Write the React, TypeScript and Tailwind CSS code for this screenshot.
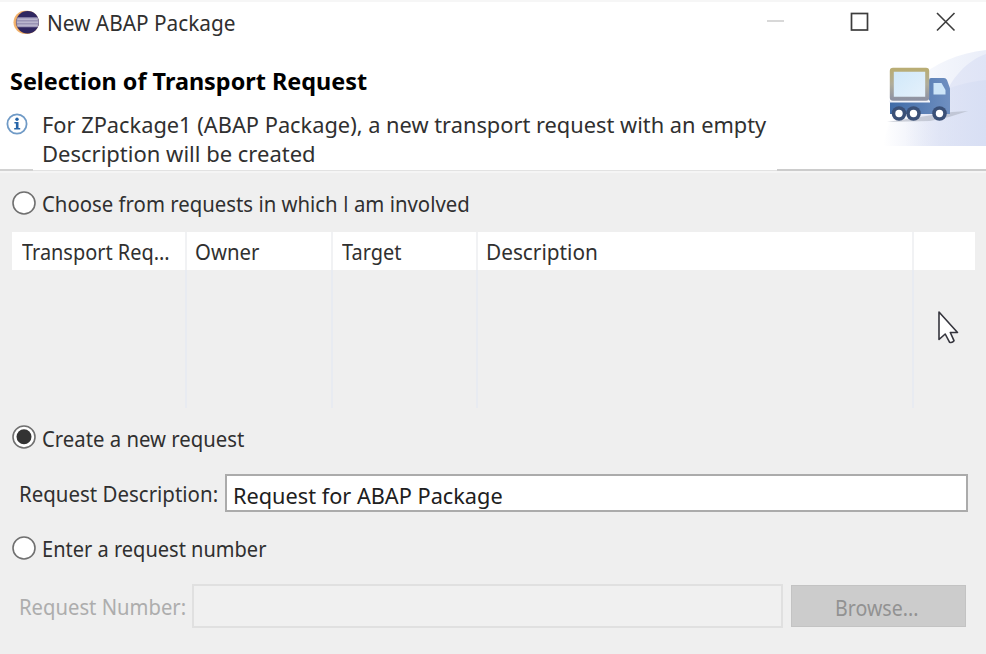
import type { ReactNode } from 'react';

function Label({ className = '', children }: { className?: string; children: ReactNode }) {
  return (
    <span className={`block origin-left whitespace-nowrap text-[22px] leading-[30px] ${className}`}>{children}</span>
  );
}

function EclipseIcon() {
  return (
    <svg className="h-[26px] w-[28px] shrink-0" viewBox="0 0 28 26">
      <circle cx="13" cy="13.300" r="11.500" fill="#f3b46f" />
      <circle cx="15.200" cy="13.300" r="11.600" fill="#d99a5b" />
      <circle cx="15.600" cy="13.300" r="11.300" fill="#2f2660" />
      <path d="M5.600 8.300h20a11.300 11.300 0 0 1 0 10h-20a11.300 11.300 0 0 1 0-10z" fill="#9a94b5" />
      <path d="M5.500 10.200h20M5 13.300h21M5.500 16.400h20" stroke="#bab5cd" strokeWidth="1.600" />
    </svg>
  );
}

function InfoIcon() {
  return (
    <svg className="h-[22px] w-[22px] shrink-0" viewBox="0 0 22 22">
      <circle cx="11" cy="11" r="9.600" fill="#fff" stroke="#6f9ac6" strokeWidth="1.800" />
      <circle cx="11" cy="6.200" r="1.700" fill="#2564a8" />
      <path d="M8.400 9h4.100v6h1.700v1.600H8.200V15h1.700v-4.500H8.400z" fill="#2564a8" />
    </svg>
  );
}

function TruckBanner() {
  return (
    <svg className="h-[100px] w-[106px] shrink-0" viewBox="880 48 106 100">
      <defs>
        <linearGradient id="sky" x1="0" x2="1" y1="0" y2="0">
          <stop offset="0" stopColor="#fff" />
          <stop offset=".55" stopColor="#e5e9f7" />
          <stop offset="1" stopColor="#dfe4f6" />
        </linearGradient>
        <linearGradient id="outer" x1="0" x2="1" y1="0" y2="0">
          <stop offset="0" stopColor="#fff" />
          <stop offset="1" stopColor="#eaeef9" />
        </linearGradient>
        <linearGradient id="inner" x1="0" x2="1" y1="0" y2="0">
          <stop offset="0" stopColor="#dbe1f4" stopOpacity="0" />
          <stop offset="1" stopColor="#d8dff4" />
        </linearGradient>
        <linearGradient id="frame" x1="0" x2="0" y1="0" y2="1">
          <stop offset="0" stopColor="#b9ad75" />
          <stop offset=".5" stopColor="#b0ad9b" />
          <stop offset="1" stopColor="#8f93a3" />
        </linearGradient>
        <linearGradient id="cargo" x1="0" x2="1" y1="0" y2="1">
          <stop offset="0" stopColor="#cfe8fa" />
          <stop offset="1" stopColor="#e6f1fb" />
        </linearGradient>
        <linearGradient id="body" x1="0" x2="1" y1="0" y2="0">
          <stop offset="0" stopColor="#406ca8" />
          <stop offset="1" stopColor="#6f8fc0" />
        </linearGradient>
      </defs>
      <path d="M883 146C891 92 930 56 986 50V146z" fill="url(#outer)" />
      <path d="M883 146C888 128 893 113 900 103H942C950 78 968 60 986 54V146z" fill="url(#sky)" />
      <path d="M905 146V118C926 98 950 83 986 80V146z" fill="url(#inner)" />
      <path d="M887 122L952 112 968 111 949 117 930 121z" fill="#a9aebb" opacity=".55" />
      <path d="M890 102H929V80q0-2 2-2h13q2 0 3 2l2.500 7q.5 1 .5 2v25H890z" fill="url(#body)" />
      <path d="M933.500 83h8l4 7v4.500h-12z" fill="#cde5f8" />
      <path d="M889 101.500H930" stroke="#f3f5fb" strokeWidth="2" />
      <rect x="891.800" y="69.800" width="35.400" height="29" rx="1.200" fill="url(#cargo)" stroke="url(#frame)" strokeWidth="4" />
      {[899, 913.5, 939.5].map((x) => (
        <g key={x}>
          <circle cx={x} cy="113.500" r="7.300" fill="#3a5077" />
          <circle cx={x} cy="113.500" r="3.700" fill="#fff" />
        </g>
      ))}
    </svg>
  );
}

function Radio({ checked = false }: { checked?: boolean }) {
  return (
    <svg className="size-6 shrink-0" viewBox="0 0 24 24">
      <circle cx="12" cy="12" r="11" fill="#fff" stroke="#707070" strokeWidth="1.600" />
      {checked && <circle cx="12" cy="11.800" r="7.500" fill="#333" />}
    </svg>
  );
}

export default function App() {
  return (
    <div className="flex h-[654px] w-[986px] flex-col overflow-hidden bg-[#efefef] font-['Noto_Sans','Open_Sans',sans-serif] text-[#303030]">
      <header className="flex h-[173px] shrink-0 flex-col border-b-2 border-[#f5f5f5] bg-white">
        <div className="flex h-[48px] shrink-0 items-start border-t-2 border-[#f6f6f6] pl-[12px]">
          <div className="mt-[7px]"><EclipseIcon /></div>
          <Label className="mt-[5px] ml-[7px] scale-x-[.945]">New ABAP Package</Label>
          <svg className="mt-[6px] mr-[29px] ml-auto h-[28px] w-[192px]" viewBox="765 8 192 28" fill="none">
            <path d="M767 21h17" stroke="#d8d8d8" strokeWidth="2" />
            <rect x="851.500" y="13.500" width="16" height="16.500" stroke="#3c3c3c" strokeWidth="1.700" />
            <path d="M937 13l17.500 17.500M954.500 13L937 30.500" stroke="#3c3c3c" strokeWidth="1.600" />
          </svg>
        </div>
        <div className="flex h-[121px] shrink-0 justify-between">
          <div className="pt-[17px]">
            <h1 className="ml-[10px] origin-left scale-x-[.995] text-[23.5px] leading-[32px] font-bold whitespace-nowrap text-black">
              Selection of Transport Request
            </h1>
            <div className="mt-[12px] flex pl-[6px]">
              <div className="mt-[4px]"><InfoIcon /></div>
              <div className="ml-[14px]">
                <Label className="scale-x-[.991]">For ZPackage1 (ABAP Package), a new transport request with an empty</Label>
                <Label className="-mt-px">Description will be created</Label>
              </div>
            </div>
          </div>
          <TruckBanner />
        </div>
        <div className="flex h-[2px] shrink-0 items-end justify-between">
          <span className="h-[2px] w-[33px] bg-[#d2d2d2]" />
          <span className="h-px flex-1 bg-[#e2e2e2]" />
          <span className="h-[2px] w-[209px] bg-[#cccccc]" />
        </div>
      </header>

      <div className="mt-[15px] flex h-[30px] shrink-0 items-center pl-3">
        <Radio />
        <Label className="ml-[6px] scale-x-[.925]">
          Choose from requests in which <span className="font-['Open_Sans']">I</span> am involved
        </Label>
      </div>

      <div className="relative mt-[14px] ml-3 grid h-[176px] w-[963px] shrink-0 grid-cols-[175px_146px_145px_436px_61px] grid-rows-[38px_1fr]">
        <div className="border-r-2 border-[#f1f2f4] bg-white pt-[4px] pl-[10px]"><Label className="scale-x-[.905]">Transport Req...</Label></div>
        <div className="border-r-2 border-[#f1f2f4] bg-white pt-[4px] pl-[8px]"><Label className="scale-x-[.925]">Owner</Label></div>
        <div className="border-r-2 border-[#f1f2f4] bg-white pt-[4px] pl-[9px]"><Label className="scale-x-[.905]">Target</Label></div>
        <div className="border-r-2 border-[#f1f2f4] bg-white pt-[4px] pl-[8px]"><Label className="scale-x-[.945]">Description</Label></div>
        <div className="bg-white" />
        <div className="border-r-2 border-[#e8ebf1]" />
        <div className="border-r-2 border-[#e8ebf1]" />
        <div className="border-r-2 border-[#e8ebf1]" />
        <div className="border-r-2 border-[#e8ebf1]" />
        <div />
        <svg className="absolute top-[78px] left-[925px] h-[36px] w-[24px]" viewBox="0 0 24 36">
          <path d="M2 2V29.500L8.200 24 12.500 32.200q2.800 1 4.500-1.500L13.300 22.500H20.500z" fill="#fff" stroke="#35353d" strokeWidth="1.600" strokeLinejoin="round" />
        </svg>
      </div>

      <div className="mt-[14px] flex h-[30px] shrink-0 items-center pl-3">
        <Radio checked />
        <Label className="mt-px ml-[6px] scale-x-[.923]">Create a new request</Label>
      </div>

      <div className="mt-[21px] flex h-[40px] shrink-0 items-center pl-[19px]">
        <Label className="w-[206px] scale-x-[.93]">Request Description:</Label>
        <div className="flex h-[38px] w-[743px] items-center border-2 border-[#ababab] bg-white pl-[6px]">
          <Label className="mt-[3px] scale-x-[.987] text-[#202020]">Request for ABAP Package</Label>
        </div>
      </div>

      <div className="mt-[20px] flex h-[30px] shrink-0 items-center pl-3">
        <Radio />
        <Label className="ml-[6px] scale-x-[.91]">Enter a request number</Label>
      </div>

      <div className="mt-[20px] flex h-[46px] shrink-0 items-center pl-[19px]">
        <Label className="w-[173px] scale-x-[.92] text-[#adadad]">Request Number:</Label>
        <div className="h-[44px] w-[591px] border-2 border-[#e0e0e0] bg-[#f0f0f0]" />
        <div className="ml-2 flex h-[42px] w-[175px] items-center justify-center border border-[#c3c3c3] bg-[#cccccc]">
          <Label className="mt-px origin-center translate-x-[3px] scale-x-[.89] text-[#929292]">Browse...</Label>
        </div>
      </div>
    </div>
  );
}
